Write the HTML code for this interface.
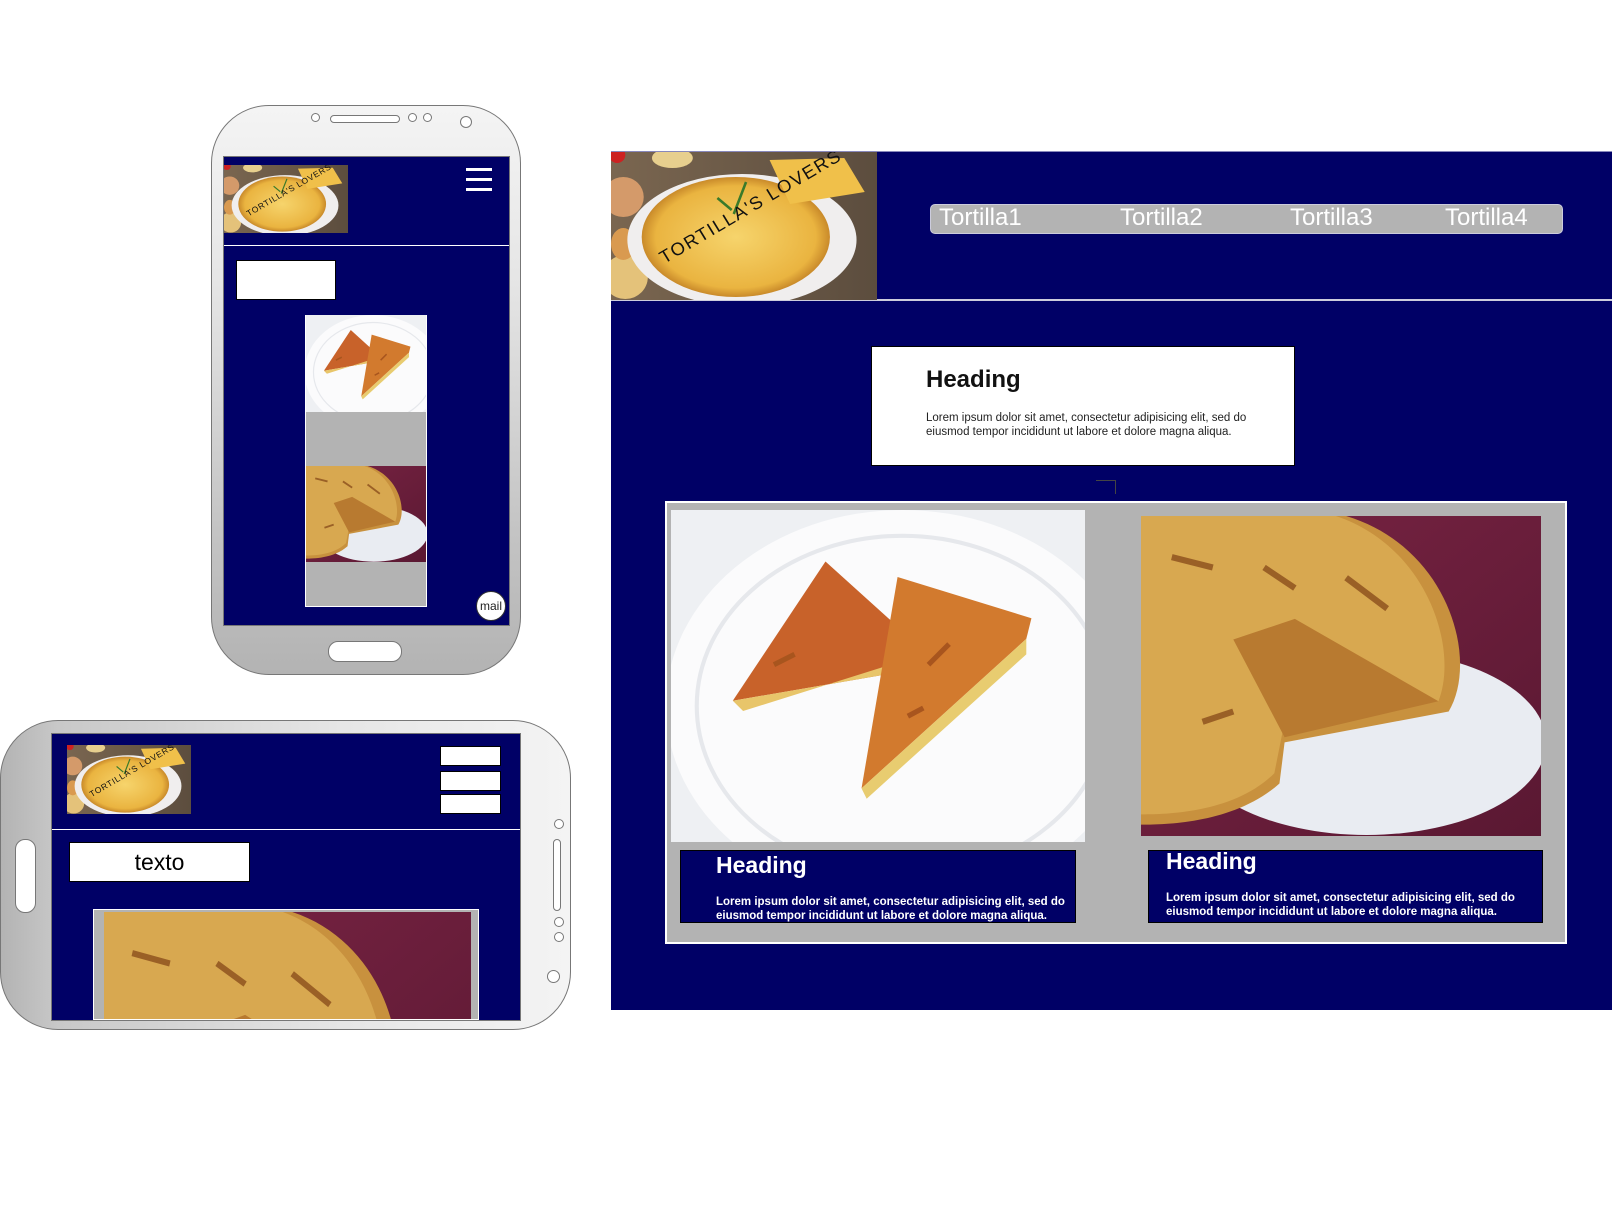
<!DOCTYPE html>
<html><head><meta charset="utf-8">
<style>
*{margin:0;padding:0;box-sizing:border-box}
body{width:1612px;height:1232px;background:#fff;position:relative;overflow:hidden;font-family:"Liberation Sans",Arial,sans-serif}
.a{position:absolute}
.blue{background:#000066}
svg{display:block}
</style></head><body>

<!-- ===== Portrait phone ===== -->
<div class="a" style="left:211px;top:105px;width:310px;height:570px;border:1.5px solid #777;border-radius:58px;background:linear-gradient(#f4f4f4 0%,#e6e6e6 30%,#c4c4c4 75%,#b3b3b3 100%)"></div>
<div class="a" style="left:311px;top:113px;width:9px;height:9px;border:1.3px solid #777;border-radius:50%;background:#fff"></div>
<div class="a" style="left:330px;top:115px;width:70px;height:8px;border:1.3px solid #777;border-radius:4px;background:#fff"></div>
<div class="a" style="left:408px;top:113px;width:9px;height:9px;border:1.3px solid #777;border-radius:50%;background:#fff"></div>
<div class="a" style="left:423px;top:113px;width:9px;height:9px;border:1.3px solid #777;border-radius:50%;background:#fff"></div>
<div class="a" style="left:460px;top:116px;width:12px;height:12px;border:1.3px solid #777;border-radius:50%;background:#fff"></div>
<div class="a" style="left:328px;top:641px;width:74px;height:21px;border:1.3px solid #777;border-radius:10px;background:#fff"></div>
<div class="a blue" style="left:223px;top:156px;width:287px;height:470px;border:1px solid #777"></div>
<div class="a" style="left:224px;top:245px;width:285px;height:1px;background:#fff"></div>
<svg class="a" style="left:224px;top:165px" width="124" height="68" viewBox="0 0 260 148" preserveAspectRatio="none"><use href="#logo"/></svg>
<div class="a" style="left:466px;top:168px;width:26px;height:3px;background:#fff"></div>
<div class="a" style="left:466px;top:178px;width:26px;height:3px;background:#fff"></div>
<div class="a" style="left:466px;top:188px;width:26px;height:3px;background:#fff"></div>
<div class="a" style="left:236px;top:260px;width:100px;height:40px;background:#fff;border:1px solid #000"></div>
<div class="a" style="left:305px;top:315px;width:122px;height:292px;background:#b3b3b3;border:1px solid #fff"></div>
<svg class="a" style="left:306px;top:315px" width="120" height="97" viewBox="0 0 402 322" preserveAspectRatio="none"><use href="#t1"/></svg>
<svg class="a" style="left:306px;top:466px" width="120" height="96" viewBox="0 0 390 311" preserveAspectRatio="none"><use href="#t2"/></svg>
<div class="a" style="left:476px;top:591px;width:30px;height:30px;border-radius:50%;background:#fff;border:1px solid #333;font-size:12px;line-height:28px;text-align:center;color:#222">mail</div>

<!-- ===== Landscape phone ===== -->
<div class="a" style="left:0px;top:720px;width:571px;height:310px;border:1.5px solid #777;border-radius:58px;background:linear-gradient(90deg,#b3b3b3 0%,#c8c8c8 10%,#e6e6e6 60%,#f4f4f4 100%)"></div>
<div class="a" style="left:15px;top:839px;width:21px;height:74px;border:1.3px solid #777;border-radius:10px;background:#fff"></div>
<div class="a" style="left:554px;top:819px;width:10px;height:10px;border:1.3px solid #777;border-radius:50%;background:#fff"></div>
<div class="a" style="left:553px;top:839px;width:8px;height:72px;border:1.3px solid #777;border-radius:4px;background:#fff"></div>
<div class="a" style="left:554px;top:917px;width:10px;height:10px;border:1.3px solid #777;border-radius:50%;background:#fff"></div>
<div class="a" style="left:554px;top:932px;width:10px;height:10px;border:1.3px solid #777;border-radius:50%;background:#fff"></div>
<div class="a" style="left:547px;top:970px;width:13px;height:13px;border:1.3px solid #777;border-radius:50%;background:#fff"></div>
<div class="a blue" style="left:51px;top:733px;width:470px;height:288px;border:1px solid #777"></div>
<div class="a" style="left:52px;top:829px;width:468px;height:1px;background:#fff"></div>
<svg class="a" style="left:67px;top:745px" width="124" height="69" viewBox="0 0 260 148" preserveAspectRatio="none"><use href="#logo"/></svg>
<div class="a" style="left:440px;top:746px;width:61px;height:20px;background:#fff;border:1px solid #000"></div>
<div class="a" style="left:440px;top:771px;width:61px;height:20px;background:#fff;border:1px solid #000"></div>
<div class="a" style="left:440px;top:794px;width:61px;height:20px;background:#fff;border:1px solid #000"></div>
<div class="a" style="left:69px;top:842px;width:181px;height:40px;background:#fff;border:1px solid #000;font-size:23px;line-height:38px;text-align:center;color:#000">texto</div>
<div class="a" style="left:93px;top:909px;width:386px;height:111px;background:#b3b3b3;border:1px solid #fff;overflow:hidden">
<svg class="a" style="left:10px;top:2px" width="367" height="320" viewBox="0 0 390 311" preserveAspectRatio="none"><use href="#t2"/></svg>
</div>

<!-- ===== Desktop ===== -->
<div class="a blue" style="left:611px;top:151px;width:1001px;height:859px"></div>
<div class="a" style="left:611px;top:151px;width:1001px;height:1px;background:#8888bb"></div>
<div class="a" style="left:611px;top:299px;width:1001px;height:2px;background:#ccd"></div>
<svg class="a" style="left:611px;top:152px" width="266" height="148" viewBox="0 0 260 148" preserveAspectRatio="none">
<defs>
<linearGradient id="wood" x1="0" x2="1"><stop offset="0" stop-color="#7a6650"/><stop offset="1" stop-color="#5c4d3e"/></linearGradient>
<linearGradient id="mar" x1="0" y1="0" x2="1" y2="1"><stop offset="0" stop-color="#7a2444"/><stop offset="1" stop-color="#5a1832"/></linearGradient>
<radialGradient id="tg" cx=".5" cy=".5" r=".5"><stop offset="0" stop-color="#f6d46c"/><stop offset=".85" stop-color="#eab440"/><stop offset="1" stop-color="#c98a2a"/></radialGradient>
<g id="logo">
<rect width="260" height="148" fill="url(#wood)"/>
<circle cx="12" cy="45" r="20" fill="#d49a6a"/>
<circle cx="6" cy="3" r="8" fill="#c22"/>
<ellipse cx="14" cy="125" rx="22" ry="22" fill="#e4c27a"/>
<ellipse cx="12" cy="92" rx="12" ry="16" fill="#d99a50"/>
<ellipse cx="60" cy="6" rx="20" ry="10" fill="#e7cf8e"/>
<ellipse cx="128" cy="88" rx="112" ry="66" fill="#f0eeee"/>
<ellipse cx="122" cy="85" rx="92" ry="60" fill="url(#tg)"/>
<path d="M155 8 L228 6 L248 40 L175 52 Z" fill="#f0c04a"/>
<path d="M120 62 l12 -32 M118 58 l-14 -12" stroke="#3a7a2a" stroke-width="2.5"/>
<text x="0" y="0" transform="translate(52 112) rotate(-31)" font-family="Liberation Sans,sans-serif" font-size="18" fill="#111" letter-spacing="1.5">TORTILLA'S LOVERS</text>
</g>
<g id="t1">
<rect width="402" height="322" fill="#eef0f3"/>
<ellipse cx="225" cy="190" rx="230" ry="190" fill="#fbfbfc"/>
<ellipse cx="225" cy="190" rx="200" ry="165" fill="none" stroke="#e6e8ec" stroke-width="4"/>
<path d="M60 185 L150 50 L250 140 L235 155 Z" fill="#c8622a"/>
<path d="M60 185 L235 155 L245 140 L70 195 Z" fill="#e8c56a"/>
<path d="M185 270 L220 65 L350 105 L345 125 Z" fill="#d27a2e"/>
<path d="M185 270 L345 125 L345 140 L190 280 Z" fill="#e8cc70"/>
<path d="M100 150 l20 -10 M250 150 l20 -20 M230 200 l15 -8" stroke="#a8551e" stroke-width="5"/>
</g>
<g id="t2">
<rect width="390" height="311" fill="url(#mar)"/>
<ellipse cx="220" cy="220" rx="175" ry="90" fill="#e9ecf2"/>
<path d="M0 0 L200 0 C300 30 330 140 300 190 L140 220 L135 260 C90 300 20 300 0 300 Z" fill="#c8913e"/>
<path d="M0 0 L190 0 C280 30 310 130 290 180 L140 200 L130 250 C90 290 20 290 0 290 Z" fill="#d8a850"/>
<path d="M90 120 L150 100 L290 180 L140 215 Z" fill="#b87a30"/>
<path d="M30 40 l40 10 M120 50 l30 20 M60 200 l30 -10 M200 60 l40 30" stroke="#9a6026" stroke-width="6"/>
</g>
</defs>
<use href="#logo"/>
</svg>

<div class="a" style="left:930px;top:204px;width:633px;height:30px;background:#b3b3b3;border-radius:5px;border:1px solid #ccd"></div>
<div class="a" style="left:939px;top:203px;font-size:24px;line-height:30px;color:#fff">Tortilla1</div>
<div class="a" style="left:1120px;top:203px;font-size:24px;line-height:30px;color:#fff">Tortilla2</div>
<div class="a" style="left:1290px;top:203px;font-size:24px;line-height:30px;color:#fff">Tortilla3</div>
<div class="a" style="left:1445px;top:203px;font-size:24px;line-height:30px;color:#fff">Tortilla4</div>

<div class="a" style="left:871px;top:346px;width:424px;height:120px;background:#fff;border:1px solid #000"></div>
<div class="a" style="left:926px;top:366px;font-size:24px;font-weight:bold;color:#111">Heading</div>
<div class="a" style="left:926px;top:411px;font-size:11.5px;line-height:14px;color:#222">Lorem ipsum dolor sit amet, consectetur adipisicing elit, sed do<br>eiusmod tempor incididunt ut labore et dolore magna aliqua.</div>
<div class="a" style="left:1096px;top:480px;width:20px;height:14px;border-top:1px solid #444;border-right:1px solid #444"></div>

<div class="a" style="left:665px;top:501px;width:902px;height:443px;background:#b3b3b3;border:2px solid #fff"></div>
<svg class="a" style="left:671px;top:510px" width="414" height="332" viewBox="0 0 402 322" preserveAspectRatio="none"><use href="#t1"/></svg>
<svg class="a" style="left:1141px;top:516px" width="400" height="320" viewBox="0 0 390 311" preserveAspectRatio="none"><use href="#t2"/></svg>

<div class="a blue" style="left:680px;top:850px;width:396px;height:73px;border:1px solid #000"></div>
<div class="a" style="left:716px;top:852px;font-size:23px;font-weight:bold;color:#fff">Heading</div>
<div class="a" style="left:716px;top:895px;font-size:11.5px;line-height:14px;font-weight:bold;color:#fff">Lorem ipsum dolor sit amet, consectetur adipisicing elit, sed do<br>eiusmod tempor incididunt ut labore et dolore magna aliqua.</div>

<div class="a blue" style="left:1148px;top:850px;width:395px;height:73px;border:1px solid #000"></div>
<div class="a" style="left:1166px;top:848px;font-size:23px;font-weight:bold;color:#fff">Heading</div>
<div class="a" style="left:1166px;top:891px;font-size:11.5px;line-height:14px;font-weight:bold;color:#fff">Lorem ipsum dolor sit amet, consectetur adipisicing elit, sed do<br>eiusmod tempor incididunt ut labore et dolore magna aliqua.</div>

</body></html>
